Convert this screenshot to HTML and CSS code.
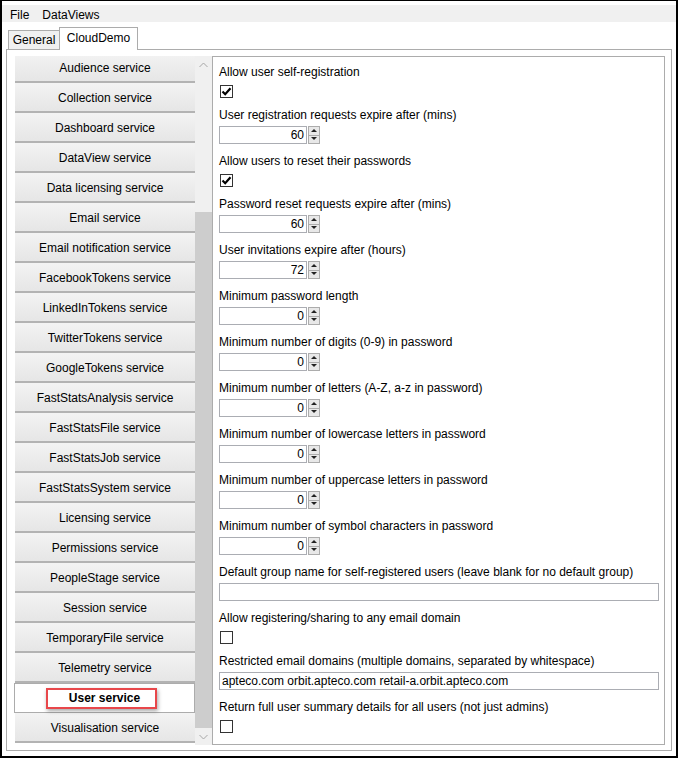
FILE: index.html
```html
<!DOCTYPE html>
<html lang="en">
  <head>
    <meta charset="UTF-8" />
    <title>CloudDemo</title>
    <link rel="stylesheet" href="styles.css">
  </head>

  <body>
    <div class="window">
      <div class="menubar">
        <span class="menu-item">File</span>
        <span class="menu-item">DataViews</span>
      </div>

      <div class="tabstrip">
        <div class="tab">General</div>
        <div class="tab active">CloudDemo</div>
      </div>

      <div class="tabpage">
        <div class="services">
          <div class="service-list">
            <div class="service-items">
              <div class="service">Audience service</div>
              <div class="service">Collection service</div>
              <div class="service">Dashboard service</div>
              <div class="service">DataView service</div>
              <div class="service">Data licensing service</div>
              <div class="service">Email service</div>
              <div class="service">Email notification service</div>
              <div class="service">FacebookTokens service</div>
              <div class="service">LinkedInTokens service</div>
              <div class="service">TwitterTokens service</div>
              <div class="service">GoogleTokens service</div>
              <div class="service">FastStatsAnalysis service</div>
              <div class="service">FastStatsFile service</div>
              <div class="service">FastStatsJob service</div>
              <div class="service">FastStatsSystem service</div>
              <div class="service">Licensing service</div>
              <div class="service">Permissions service</div>
              <div class="service">PeopleStage service</div>
              <div class="service">Session service</div>
              <div class="service">TemporaryFile service</div>
              <div class="service">Telemetry service</div>
              <div class="service selected">User service<div class="marker"></div></div>
              <div class="service">Visualisation service</div>
            </div>
          </div>
          <div class="scrollbar">
            <div class="scroll-arrow">
              <svg width="9" height="6" viewBox="0 0 9 6"><path d="M0.5 5 L4.5 1 L8.5 5" fill="none" stroke="#a6a6a6" stroke-width="1"/></svg>
            </div>
            <div class="scroll-track"><div class="scroll-thumb"></div></div>
            <div class="scroll-arrow">
              <svg width="9" height="6" viewBox="0 0 9 6"><path d="M0.5 1 L4.5 5 L8.5 1" fill="none" stroke="#a6a6a6" stroke-width="1"/></svg>
            </div>
          </div>
        </div>

        <div class="settings">
          <div class="field check-field">
            <label>Allow user self-registration</label>
            <div class="checkbox checked">
              <svg width="11" height="11" viewBox="0 0 11 11"><path d="M1.5 5.5 L4.2 8.2 L9.5 2.2" fill="none" stroke="#000" stroke-width="2.2"/></svg>
            </div>
          </div>
          <div class="field">
            <label>User registration requests expire after (mins)</label>
            <div class="spinner">
              <div class="spin-value">60</div>
              <div class="spin-buttons"><div class="spin-up"></div><div class="spin-down"></div></div>
            </div>
          </div>
          <div class="field check-field">
            <label>Allow users to reset their passwords</label>
            <div class="checkbox checked">
              <svg width="11" height="11" viewBox="0 0 11 11"><path d="M1.5 5.5 L4.2 8.2 L9.5 2.2" fill="none" stroke="#000" stroke-width="2.2"/></svg>
            </div>
          </div>
          <div class="field">
            <label>Password reset requests expire after (mins)</label>
            <div class="spinner">
              <div class="spin-value">60</div>
              <div class="spin-buttons"><div class="spin-up"></div><div class="spin-down"></div></div>
            </div>
          </div>
          <div class="field">
            <label>User invitations expire after (hours)</label>
            <div class="spinner">
              <div class="spin-value">72</div>
              <div class="spin-buttons"><div class="spin-up"></div><div class="spin-down"></div></div>
            </div>
          </div>
          <div class="field">
            <label>Minimum password length</label>
            <div class="spinner">
              <div class="spin-value">0</div>
              <div class="spin-buttons"><div class="spin-up"></div><div class="spin-down"></div></div>
            </div>
          </div>
          <div class="field">
            <label>Minimum number of digits (0-9) in password</label>
            <div class="spinner">
              <div class="spin-value">0</div>
              <div class="spin-buttons"><div class="spin-up"></div><div class="spin-down"></div></div>
            </div>
          </div>
          <div class="field">
            <label>Minimum number of letters (A-Z, a-z in password)</label>
            <div class="spinner">
              <div class="spin-value">0</div>
              <div class="spin-buttons"><div class="spin-up"></div><div class="spin-down"></div></div>
            </div>
          </div>
          <div class="field">
            <label>Minimum number of lowercase letters in password</label>
            <div class="spinner">
              <div class="spin-value">0</div>
              <div class="spin-buttons"><div class="spin-up"></div><div class="spin-down"></div></div>
            </div>
          </div>
          <div class="field">
            <label>Minimum number of uppercase letters in password</label>
            <div class="spinner">
              <div class="spin-value">0</div>
              <div class="spin-buttons"><div class="spin-up"></div><div class="spin-down"></div></div>
            </div>
          </div>
          <div class="field">
            <label>Minimum number of symbol characters in password</label>
            <div class="spinner">
              <div class="spin-value">0</div>
              <div class="spin-buttons"><div class="spin-up"></div><div class="spin-down"></div></div>
            </div>
          </div>
          <div class="field">
            <label>Default group name for self-registered users (leave blank for no default group)</label>
            <div class="textbox"></div>
          </div>
          <div class="field check-field">
            <label>Allow registering/sharing to any email domain</label>
            <div class="checkbox"></div>
          </div>
          <div class="field">
            <label>Restricted email domains (multiple domains, separated by whitespace)</label>
            <div class="textbox">apteco.com orbit.apteco.com retail-a.orbit.apteco.com</div>
          </div>
          <div class="field check-field">
            <label>Return full user summary details for all users (not just admins)</label>
            <div class="checkbox"></div>
          </div>
        </div>
      </div>
    </div>
  </body>
</html>
```

FILE: styles.css
```css
* {
  box-sizing: border-box;
}

body {
  margin: 0;
  background-color: white;
  font-family: "Liberation Sans", Arial, sans-serif;
  font-size: 12px;
  color: black;
}

.window {
  width: 678px;
  height: 758px;
  border: 2px solid black;
  border-top-width: 1px;
  background-color: white;
  display: flex;
  flex-direction: column;
}

/* menu */
.menubar {
  margin-top: 4px;
  height: 17px;
  padding: 2px 0 0 8px;
  line-height: 16px;
  background-color: #f0f0f0;
  display: flex;
  gap: 13px;
}

/* tabs */
.tabstrip {
  height: 27px;
  display: flex;
  align-items: flex-end;
  padding-left: 6px;
}

.tab {
  width: 51px;
  height: 19px;
  line-height: 19px;
  text-align: center;
  background-color: #f0f0f0;
  border: 1px solid #acacac;
  border-right: none;
  border-bottom: none;
}

.tab.active {
  width: 79px;
  height: 23px;
  line-height: 21px;
  background-color: white;
  border-right: 1px solid #acacac;
  margin-bottom: -1px;
  position: relative;
  z-index: 1;
}

.tabpage {
  margin-left: 4px;
  width: 666px;
  height: 702px;
  border: 1px solid #acacac;
  padding: 6px 6px 5px 7px;
  display: flex;
}

/* service list on the left */
.services {
  width: 198px;
  display: flex;
}

.service-list {
  width: 181px;
  overflow: hidden;
}

.service-items {
  margin-top: -3px;
}

.service {
  margin-left: 1px;
  height: 30px;
  line-height: 30px;
  text-align: center;
  background: linear-gradient(#f3f3f3, #e6e6e6);
  border-bottom: 2px solid #b3b3b3;
  white-space: nowrap;
}

.service.selected {
  margin-left: 0;
  position: relative;
  background: white;
  border: 1px solid #acacac;
  line-height: 28px;
  font-weight: bold;
}

.marker {
  position: absolute;
  left: 31px;
  top: 4px;
  width: 111px;
  height: 21px;
  border: 2px solid #e8474b;
  box-shadow: 1px 2px 4px rgba(0, 0, 0, 0.35);
}

.scrollbar {
  width: 17px;
  background-color: #f0f0f0;
  display: flex;
  flex-direction: column;
}

.scroll-arrow {
  height: 17px;
  display: flex;
  align-items: center;
  justify-content: center;
}

.scroll-track {
  flex: 1;
  padding-top: 139px;
  display: flex;
  flex-direction: column;
}

.scroll-thumb {
  flex: 1;
  background-color: #cdcdcd;
}

/* settings form */
.settings {
  width: 453px;
  border: 1px solid #acacac;
  padding: 7px 5px 0 6px;
}

.field label {
  display: block;
  line-height: 16px;
  white-space: nowrap;
}

.field {
  padding-bottom: 9px;
}

.checkbox {
  margin: 5px 0 0 1px;
  width: 13px;
  height: 13px;
  border: 1px solid #333333;
  background-color: white;
}

.checkbox svg {
  display: block;
}

.spinner {
  margin-top: 3px;
  display: flex;
  height: 18px;
}

.spin-value {
  width: 88px;
  border: 1px solid #abadb3;
  text-align: right;
  padding-right: 2px;
  line-height: 17px;
}

.spin-buttons {
  width: 12px;
  margin-left: 1px;
  display: flex;
  flex-direction: column;
}

.spin-up,
.spin-down {
  flex: 1;
  border: 1px solid #acacac;
  background-color: #e8e8e8;
  position: relative;
}

.spin-down {
  border-top: none;
}

.spin-up::after,
.spin-down::after {
  content: "";
  position: absolute;
  left: 2px;
  top: 2px;
  border-left: 3px solid transparent;
  border-right: 3px solid transparent;
}

.spin-up::after {
  border-bottom: 3px solid #222;
}

.spin-down::after {
  top: 1px;
  border-top: 3px solid #222;
}

.textbox {
  margin-top: 3px;
  height: 18px;
  border: 1px solid #abadb3;
  padding-left: 2px;
  line-height: 17px;
  white-space: nowrap;
}
```
